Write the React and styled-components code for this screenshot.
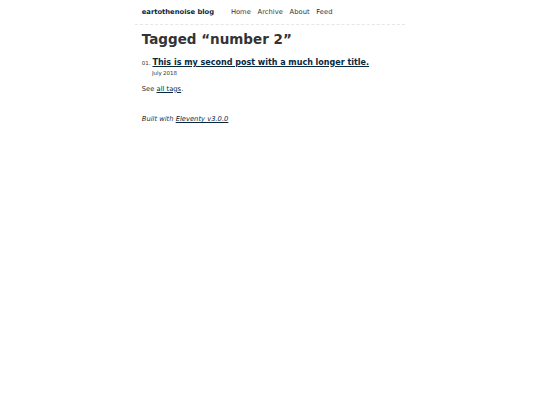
import React from 'react';
import styled, { createGlobalStyle } from 'styled-components';

const GlobalStyle = createGlobalStyle`
  html {
    font-size: 6.75px;
  }
  body {
    margin: 0 auto;
    max-width: 40em;
    font-family: "DejaVu Sans", "Noto Sans", sans-serif;
    font-size: 1rem;
    line-height: 1.5;
    color: #333;
    background: #fff;
  }
  a {
    color: #082840;
  }
`;

const Header = styled.header`
  display: flex;
  flex-wrap: wrap;
  align-items: center;
  gap: 1em 0.5em;
  padding: 1em;
  border-bottom: 1px dashed #e6e6e6;
`;

const HomeLink = styled.a`
  font-weight: 700;
  margin-right: 2em;
  text-decoration: none;
`;

const Nav = styled.ul`
  display: flex;
  margin: 0;
  padding: 0;
  list-style: none;
`;

const NavItem = styled.li`
  margin-right: 1em;

  a {
    color: #333;
    text-decoration: none;
  }
`;

const Main = styled.main`
  padding: 1rem;
`;

const Title = styled.h1`
  margin: 0 0 0.67em;
  font-size: 2em;
  line-height: 1.2;
`;

const PostList = styled.ol`
  list-style: none;
  padding: 0 0 0 1.5rem;
  margin: 1em 0;
`;

const PostItem = styled.li`
  display: flex;
  flex-wrap: wrap;
  align-items: baseline;
  margin-bottom: 1em;
`;

const Index = styled.span`
  display: inline-block;
  font-size: 0.8125em;
  line-height: 100%;
  margin-left: -1.5rem;
  color: #333;
`;

const PostLink = styled.a`
  font-size: 1.1875em;
  font-weight: 700;
  flex-basis: calc(100% - 1.5rem);
  padding-left: 0.25em;
  padding-right: 0.5em;
  text-underline-offset: 1px;
  text-decoration-thickness: 1px;
`;

const PostDate = styled.time`
  font-size: 0.8125em;
  word-spacing: -0.5px;
  color: #333;
`;

const Para = styled.p`
  margin: ${(p) => (p.$flush ? '0' : '1em 0')};
`;

const Footer = styled.footer`
  padding: 1rem;
`;

const navItems = ['Home', 'Archive', 'About', 'Feed'];

export default function App() {
  return (
    <>
      <GlobalStyle />
      <Header>
        <HomeLink href="#">eartothenoise blog</HomeLink>
        <Nav>
          {navItems.map((item) => (
            <NavItem key={item}>
              <a href="#">{item}</a>
            </NavItem>
          ))}
        </Nav>
      </Header>
      <Main>
        <Title>Tagged “number 2”</Title>
        <PostList>
          <PostItem>
            <Index>01.</Index>
            <PostLink href="#">This is my second post with a much longer title.</PostLink>
            <PostDate>July 2018</PostDate>
          </PostItem>
        </PostList>
        <Para>
          See <a href="#">all tags</a>.
        </Para>
      </Main>
      <Footer>
        <Para $flush>
          <em>
            Built with <a href="#">Eleventy v3.0.0</a>
          </em>
        </Para>
      </Footer>
    </>
  );
}
